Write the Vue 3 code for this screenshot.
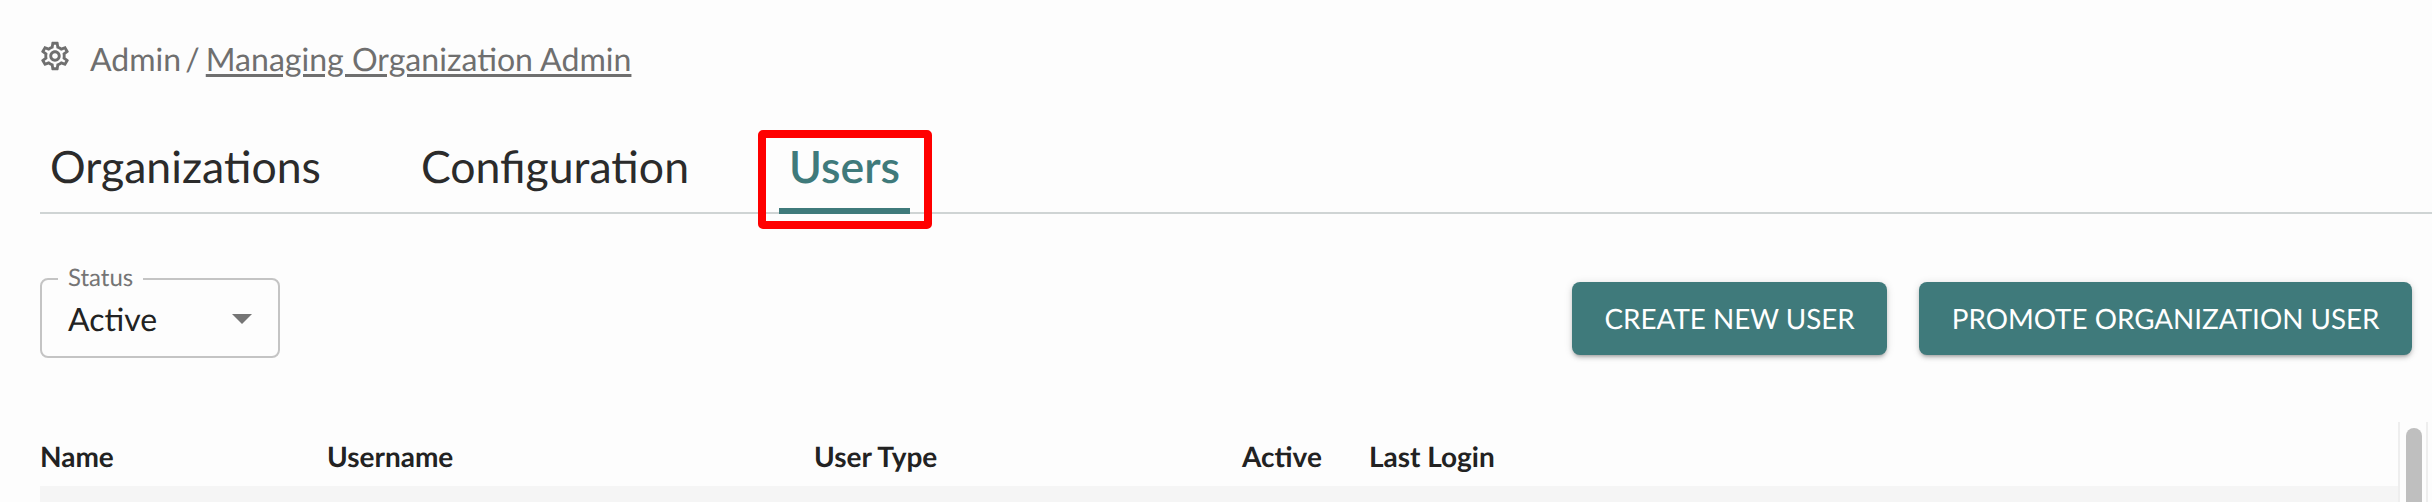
<template>
  <div class="page">
    <div class="breadcrumb">
      <svg class="gear" viewBox="0 0 24 24" fill="#6f6f6f">
        <path d="M19.43 12.98c.04-.32.07-.64.07-.98 0-.34-.03-.66-.07-.98l2.11-1.65c.19-.15.24-.42.12-.64l-2-3.46c-.09-.16-.26-.25-.44-.25-.06 0-.12.01-.17.03l-2.49 1c-.52-.4-1.08-.73-1.69-.98l-.38-2.65C14.46 2.18 14.25 2 14 2h-4c-.25 0-.46.18-.49.42l-.38 2.65c-.61.25-1.17.59-1.69.98l-2.49-1c-.06-.02-.12-.03-.18-.03-.17 0-.34.09-.43.25l-2 3.46c-.13.22-.07.49.12.64l2.11 1.65c-.04.32-.07.65-.07.98 0 .33.03.66.07.98l-2.11 1.65c-.19.15-.24.42-.12.64l2 3.46c.09.16.26.25.44.25.06 0 .12-.01.17-.03l2.49-1c.52.4 1.08.73 1.69.98l.38 2.65c.03.24.24.42.49.42h4c.25 0 .46-.18.49-.42l.38-2.65c.61-.25 1.17-.59 1.69-.98l2.49 1c.06.02.12.03.18.03.17 0 .34-.09.43-.25l2-3.46c.12-.22.07-.49-.12-.64l-2.11-1.65zm-1.98-1.71c.04.31.05.52.05.73 0 .21-.02.43-.05.73l-.14 1.13.89.7 1.08.84-.7 1.21-1.27-.51-1.04-.42-.9.68c-.43.32-.84.56-1.25.73l-1.06.43-.16 1.13-.2 1.35h-1.4l-.19-1.35-.16-1.13-1.06-.43c-.43-.18-.83-.41-1.23-.71l-.91-.7-1.06.43-1.27.51-.7-1.21 1.08-.84.89-.7-.14-1.13c-.03-.31-.05-.54-.05-.74s.02-.43.05-.73l.14-1.13-.89-.7-1.08-.84.7-1.21 1.27.51 1.04.42.9-.68c.43-.32.84-.56 1.25-.73l1.06-.43.16-1.13.2-1.35h1.39l.19 1.35.16 1.13 1.06.43c.43.18.83.41 1.23.71l.91.7 1.06-.43 1.27-.51.7 1.21-1.07.85-.89.7.14 1.13zM12 8c-2.21 0-4 1.79-4 4s1.79 4 4 4 4-1.79 4-4-1.790-4-4-4zm0 6c-1.1 0-2-.9-2-2s.9-2 2-2 2 .9 2 2-.9 2-2 2z" />
      </svg>
      <span class="crumb">Admin /</span>
      <a class="crumb-link">Managing Organization Admin</a>
    </div>

    <div class="tabs">
      <div
        v-for="t in tabs"
        :key="t"
        class="tab"
        :class="{ activo: t === tabActivo }"
      >
        {{ t }}
        <span v-if="t === tabActivo" class="marca"></span>
      </div>
    </div>

    <div class="barra">
      <div class="select">
        <span class="select-label">Status</span>
        <span class="select-valor">Active</span>
        <span class="flecha"></span>
      </div>
      <div class="acciones">
        <button class="btn">CREATE NEW USER</button>
        <button class="btn">PROMOTE ORGANIZATION USER</button>
      </div>
    </div>

    <div class="tabla">
      <div class="tabla-main">
        <div class="fila-head">
          <div v-for="c in columnas" :key="c">{{ c }}</div>
        </div>
        <div class="fila-gris"></div>
      </div>
      <div class="scroll">
        <div class="thumb"></div>
      </div>
    </div>
  </div>
</template>

<script setup>
const tabs = ["Organizations", "Configuration", "Users"];
const tabActivo = "Users";
const columnas = ["Name", "Username", "User Type", "Active", "Last Login"];
</script>

<style>
html,
body {
  margin: 0;
  background: #fdfdfd;
  overflow: hidden;
}
</style>

<style scoped>
.page {
  height: 502px;
  box-sizing: border-box;
  padding: 40px 0 0 40px;
  background: #fdfdfd;
  font-family: Lato, sans-serif;
  text-rendering: geometricPrecision;
  color: #2b2b2b;
  overflow: hidden;
}

/* Breadcrumb */
.breadcrumb {
  display: flex;
  align-items: center;
  height: 36px;
  font-size: 32px;
  color: #6f6f6f;
  white-space: pre;
}

.gear {
  width: 34px;
  height: 34px;
  flex-shrink: 0;
  margin: 0 18px 5px -2px;
}

.crumb {
  word-spacing: -4px;
}

.crumb-link {
  margin-left: 6px;
  font-size: 32.1px;
  text-decoration: underline;
  text-underline-offset: 3px;
}

/* Tabs */
.tabs {
  display: flex;
  align-items: flex-start;
  gap: 80px;
  margin-top: 56px;
  height: 82px;
  box-sizing: border-box;
  border-bottom: 2px solid #cfd4d4;
}

.tab {
  position: relative;
  height: 82px;
  box-sizing: border-box;
  padding: 8px 10px 0;
  font-size: 44.6px;
  line-height: 54px;
}

.tab.activo {
  color: #3f7a7b;
  font-weight: 600;
}

.tab.activo::after {
  content: "";
  position: absolute;
  left: 0;
  right: 0;
  bottom: 0;
  height: 6px;
  background: #3f7a7b;
}

.marca {
  position: absolute;
  left: -21px;
  right: -22px;
  top: -2px;
  bottom: -15px;
  border: 8px solid #ff0000;
  border-radius: 5px;
}

/* Filtro y botones */
.barra {
  display: flex;
  justify-content: space-between;
  align-items: flex-start;
  margin-top: 64px;
  padding-right: 20px;
}

.select {
  position: relative;
  width: 240px;
  height: 80px;
  box-sizing: border-box;
  border: 2px solid #c4c4c4;
  border-radius: 8px;
  padding: 0 26px;
  display: flex;
  align-items: center;
  font-size: 32px;
  color: #222;
}

.select-label {
  position: absolute;
  top: -15px;
  left: 16px;
  padding: 0 10px;
  background: #fdfdfd;
  font-size: 24px;
  line-height: 26px;
  color: #757575;
}

.flecha {
  position: absolute;
  right: 26px;
  top: 34px;
  border-left: 10px solid transparent;
  border-right: 10px solid transparent;
  border-top: 10px solid #757575;
}

.acciones {
  display: flex;
  gap: 32px;
  margin-top: 4px;
}

.btn {
  height: 73px;
  padding: 0 32.5px;
  border: none;
  border-radius: 8px;
  background: #3f7a7b;
  color: #fff;
  font-family: Lato, sans-serif;
  text-rendering: geometricPrecision;
  font-size: 27.8px;
  box-shadow: 0 3px 3px -2px rgba(0, 0, 0, 0.2), 0 3px 4px rgba(0, 0, 0, 0.14),
    0 1px 8px rgba(0, 0, 0, 0.12);
}

/* Tabla */
.tabla {
  display: flex;
  margin-top: 64px;
  padding-right: 4px;
}

.tabla-main {
  flex: 1;
}

.fila-head {
  display: grid;
  grid-template-columns: 287px 487px 428px 127px 1fr;
  height: 64px;
  box-sizing: border-box;
  padding-top: 3px;
  align-items: center;
  font-size: 28px;
  font-weight: 700;
  color: #222;
}

.fila-gris {
  height: 16px;
  background: #f5f5f5;
}

.scroll {
  width: 30px;
  box-sizing: border-box;
  border-left: 2px solid #eeeeee;
  border-right: 2px solid #eeeeee;
  padding: 6px 6px 0;
}

.thumb {
  height: 80px;
  width: 16px;
  border-radius: 8px 8px 0 0;
  background: #bfbfbf;
}
</style>
